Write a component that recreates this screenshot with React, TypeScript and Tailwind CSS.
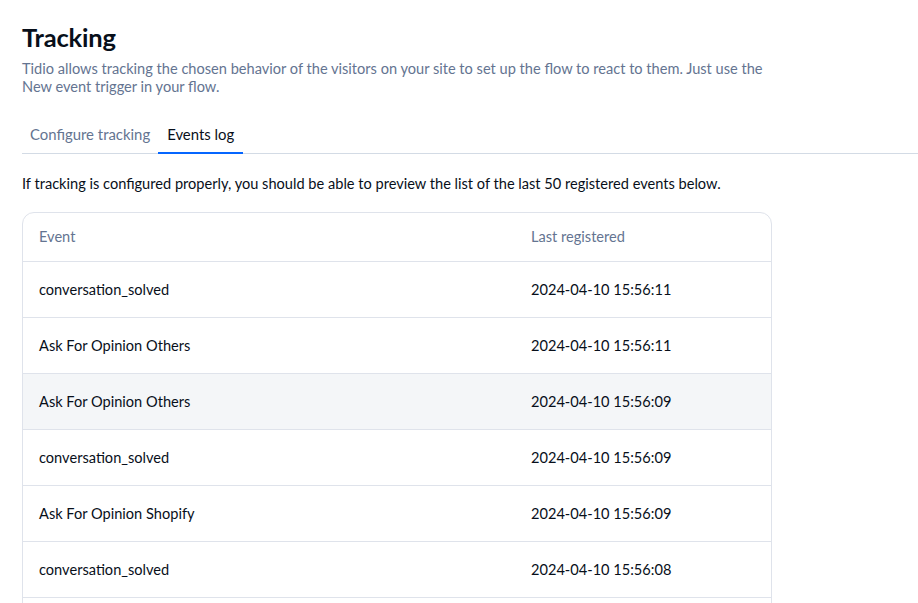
import React from 'react';

const events: { name: string; time: string }[] = [
    { name: 'conversation_solved', time: '2024-04-10 15:56:11' },
    { name: 'Ask For Opinion Others', time: '2024-04-10 15:56:11' },
    { name: 'Ask For Opinion Others', time: '2024-04-10 15:56:09' },
    { name: 'conversation_solved', time: '2024-04-10 15:56:09' },
    { name: 'Ask For Opinion Shopify', time: '2024-04-10 15:56:09' },
    { name: 'conversation_solved', time: '2024-04-10 15:56:08' },
    { name: 'conversation_solved', time: '2024-04-10 15:56:08' },
];

export default function App() {
    return (
        <div className="h-[603px] overflow-hidden bg-white pt-[22px] font-['Lato',sans-serif] text-[#080f1a]">
            {/* Header */}
            <div className="pl-[22px]">
                <h1 className="text-[25.5px] font-bold leading-[30px] tracking-[-0.2px]">Tracking</h1>
                <p className="mt-[8px] w-[750px] text-[14.6px] leading-[18px] text-[#647491]">
                    Tidio allows tracking the chosen behavior of the visitors on your site to set up the flow to react to them. Just use the New event trigger in your flow.
                </p>
            </div>

            {/* Tabs */}
            <div className="ml-[22px] mt-[19px] flex border-b border-[#d3dbe5]">
                <button className="h-[38px] px-[8px] text-[14.9px] text-[#647491]">Configure tracking</button>
                <button className="relative h-[38px] px-[9px] text-[14.9px] text-[#080f1a]">
                    Events log
                    <span className="absolute -bottom-px left-0 right-0 h-[2px] bg-[#0566ff]" />
                </button>
            </div>

            {/* Content */}
            <div className="px-[22px]">
                <p className="mt-[21px] text-[14.6px] leading-[18px]">
                    If tracking is configured properly, you should be able to preview the list of the last 50 registered events below.
                </p>

                <div className="mt-[19px] w-[750px] overflow-hidden rounded-[12px] border border-[#dfe3eb] text-[14.6px]">
                    <div className="grid h-[49px] grid-cols-[492px_1fr] items-center border-b border-[#dfe3eb] px-[16px] text-[#647491]">
                        <span>Event</span>
                        <span>Last registered</span>
                    </div>
                    {events.map((e, i) => (
                        <div
                            key={i}
                            className={`grid h-[56px] grid-cols-[492px_1fr] items-center border-b border-[#dfe3eb] px-[16px] ${i === 2 ? 'bg-[#f4f6f8]' : 'bg-white'}`}
                        >
                            <span>{e.name}</span>
                            <span>{e.time}</span>
                        </div>
                    ))}
                </div>
            </div>
        </div>
    );
}
